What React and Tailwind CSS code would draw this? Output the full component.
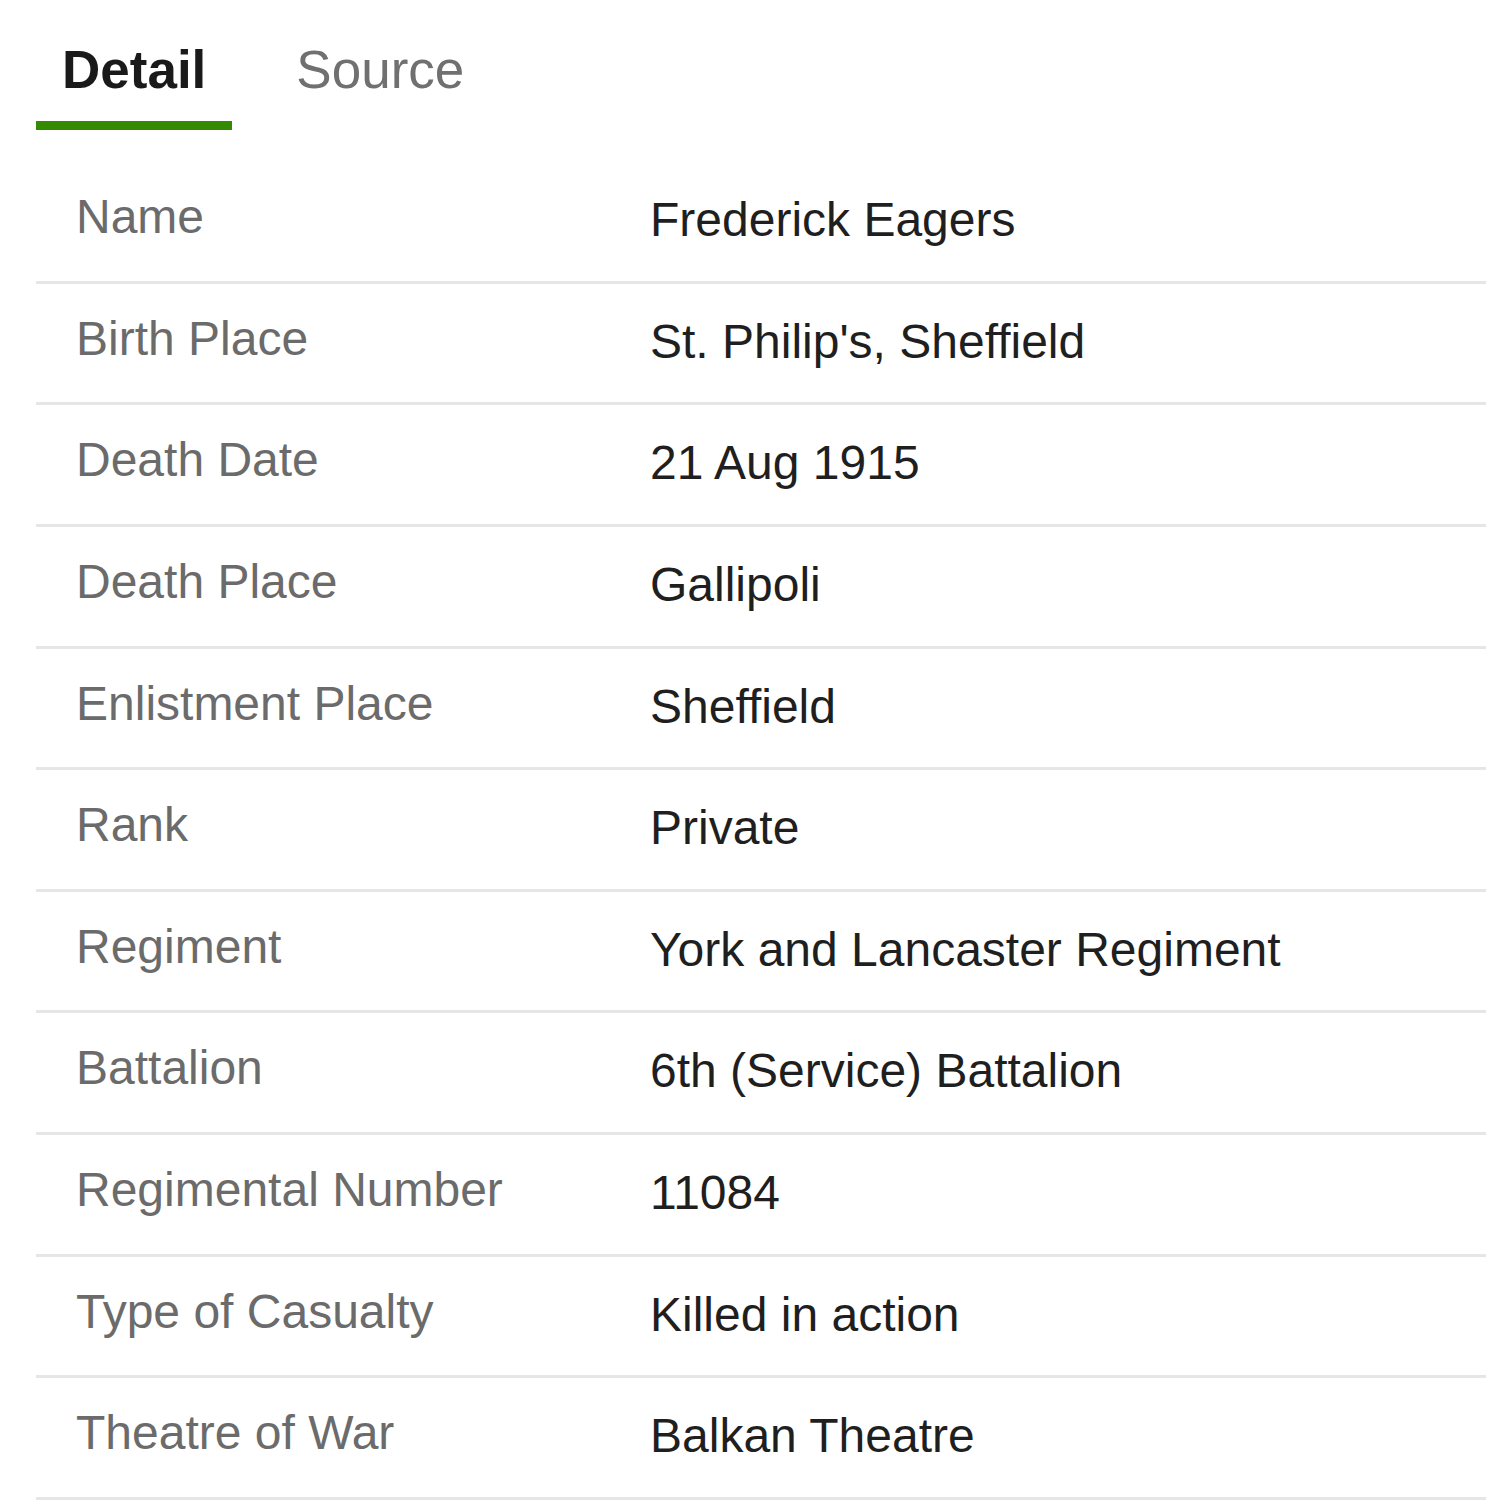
import React, { useState } from "react";

const rows = [
  ["Name", "Frederick Eagers"],
  ["Birth Place", "St. Philip's, Sheffield"],
  ["Death Date", "21 Aug 1915"],
  ["Death Place", "Gallipoli"],
  ["Enlistment Place", "Sheffield"],
  ["Rank", "Private"],
  ["Regiment", "York and Lancaster Regiment"],
  ["Battalion", "6th (Service) Battalion"],
  ["Regimental Number", "11084"],
  ["Type of Casualty", "Killed in action"],
  ["Theatre of War", "Balkan Theatre"],
];

const App = () => {
  const [tab, setTab] = useState("detail");

  return (
    <div className="min-h-[1500px] w-[1500px] bg-white font-['Liberation_Sans',Arial,sans-serif]">
      <div className="ml-[36px] w-[1450px]">
        <div className="flex">
          <button
            className={`px-[26px] pt-[40px] pb-[21px] border-b-[9px] text-[53px] leading-[60px] ${
              tab === "detail"
                ? "border-[#348a00] font-bold text-[#1a1a1a]"
                : "border-transparent text-[#707070]"
            }`}
            onClick={() => setTab("detail")}
          >
            Detail
          </button>
          <button
            className={`ml-[38px] px-[26px] pt-[40px] pb-[21px] border-b-[9px] text-[53px] leading-[60px] ${
              tab === "source"
                ? "border-[#348a00] font-bold text-[#1a1a1a]"
                : "border-transparent text-[#707070]"
            }`}
            onClick={() => setTab("source")}
          >
            Source
          </button>
        </div>

        <div className="mt-[32px]">
          {rows.map(([label, value]) => (
            <div
              key={label}
              className="grid grid-cols-[614px_1fr] h-[121.65px] border-b-[3px] border-[#e6e6e6]"
            >
              <div className="pl-[40px] pt-[27px] text-[48px] leading-[56px] text-[#6b6b6b]">
                {label}
              </div>
              <div className="pt-[30px] text-[48px] leading-[56px] text-[#1f1f1f]">
                {value}
              </div>
            </div>
          ))}
        </div>
      </div>
    </div>
  );
};

export default App;
